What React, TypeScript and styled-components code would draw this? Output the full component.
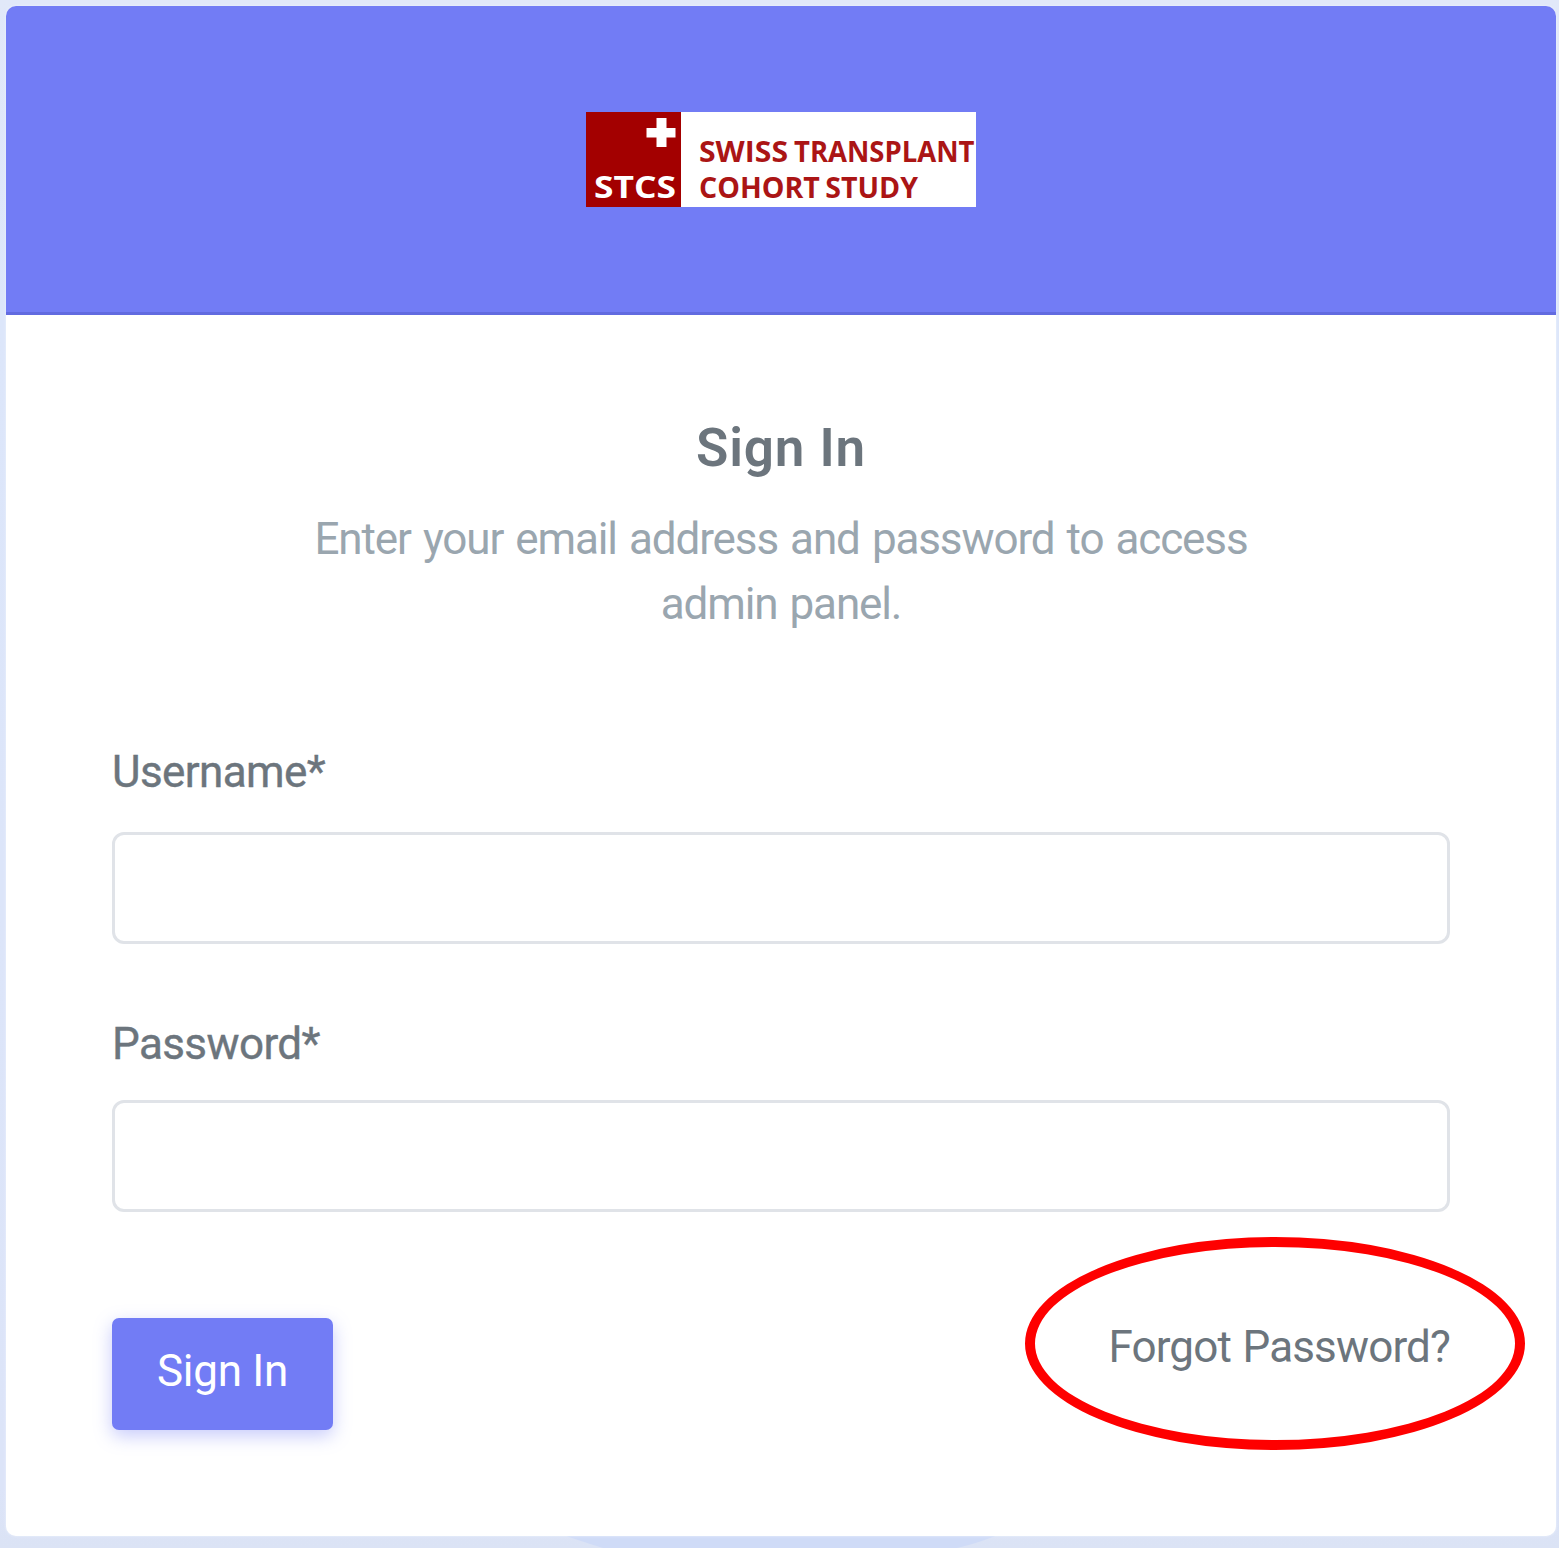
import React from "react";
import styled, { createGlobalStyle } from "styled-components";

const GlobalStyle = createGlobalStyle`
  *, *::before, *::after { box-sizing: border-box; }
  html, body { margin: 0; padding: 0; }
  body {
    background: #dce4f7;
    font-family: Roboto, "Liberation Sans", sans-serif;
    color: #6c757d;
  }
`;

const Page = styled.main`
  position: relative;
  width: 1559px;
  height: 1548px;
  padding: 6px 3px 12px 6px;
  overflow: hidden;
  background: linear-gradient(#e1e8f9, #dce6fa 20%, #dce4f8 96%, #dbe3f5);
`;

const Wave = styled.svg`
  position: absolute;
  left: 0;
  bottom: 0;
`;

const Card = styled.section`
  position: relative;
  height: 1530px;
  border-radius: 10px;
  background: #fff;
  box-shadow: 0 0 3px 0 rgba(240, 244, 254, 0.9);
  overflow: hidden;
`;

const CardHeader = styled.header`
  display: flex;
  justify-content: center;
  height: 309px;
  padding-top: 106px;
  background: #727cf5;
  border-bottom: 3px solid #626be0;
`;

const CardBody = styled.div`
  padding: 93px 106px 0;
`;

const Title = styled.h4`
  margin: 0 0 19px;
  text-align: center;
  font-size: 53px;
  line-height: 80px;
  font-weight: 600;
  letter-spacing: 0.9px;
`;

const Intro = styled.p`
  width: 1003px;
  margin: 0 auto 103px;
  padding: 0 20px;
  text-align: center;
  font-size: 44px;
  line-height: 65px;
  letter-spacing: -1.12px;
  word-spacing: 2.3px;
  color: #9aa6af;
`;

const Field = styled.div<{ $gap: number; $after: number }>`
  display: flex;
  flex-direction: column;
  gap: ${(p) => p.$gap}px;
  margin-bottom: ${(p) => p.$after}px;
`;

const Label = styled.label`
  font-size: 44px;
  line-height: 65px;
  letter-spacing: -0.6px;
  -webkit-text-stroke: 0.4px #6c757d;
`;

const Input = styled.input`
  width: 100%;
  height: 112px;
  padding: 0 38px;
  border: 3px solid #e0e3e8;
  border-radius: 12px;
  background: #fff;
  color: #6c757d;
  font: inherit;
  font-size: 44px;
  outline: none;
`;

const Actions = styled.div`
  display: flex;
  justify-content: space-between;
  align-items: flex-start;
`;

const SubmitButton = styled.button`
  width: 221px;
  height: 112px;
  padding: 0 0 5px;
  border: 0;
  border-radius: 7px;
  background: #727cf5;
  color: #fff;
  font: 400 44px/65px Roboto, "Liberation Sans", sans-serif;
  letter-spacing: -0.3px;
  box-shadow: 0 6px 18px 0 rgba(114, 124, 245, 0.4);
`;

const ForgotLink = styled.a`
  position: relative;
  margin-top: -3px;
  font-size: 44px;
  line-height: 65px;
  letter-spacing: -0.85px;
  word-spacing: 1.5px;
  color: #6c757d;
  text-decoration: none;
`;

const Highlight = styled.span`
  position: absolute;
  right: -75px;
  top: -78px;
  width: 500px;
  height: 213px;
  border: 10px solid #fe0000;
  border-radius: 50%;
  pointer-events: none;
`;

function Logo() {
  return (
    <svg width="390" height="95" viewBox="0 0 390 95" role="img" aria-label="Swiss Transplant Cohort Study">
      <rect width="390" height="95" fill="#fff" />
      <rect width="95" height="95" fill="#a30000" />
      <path d="M70.500 6h10v10h9v9.500h-9v9.500h-10V25.500H60.500V16h10z" fill="#fff" />
      <g fontFamily="'Open Sans', 'Noto Sans', sans-serif" fontWeight="700">
        <text x="8" y="86" fontSize="31" fill="#fff" textLength="82" lengthAdjust="spacingAndGlyphs">STCS</text>
        <g fontSize="28" fill="#ab1515" wordSpacing="-2">
          <text x="113" y="49.5" textLength="89" lengthAdjust="spacingAndGlyphs">SWISS</text>
          <text x="208" y="49.5" textLength="180.5" lengthAdjust="spacingAndGlyphs">TRANSPLANT</text>
          <text x="113" y="85.5" textLength="219" lengthAdjust="spacingAndGlyphs">COHORT STUDY</text>
        </g>
      </g>
    </svg>
  );
}

export default function App() {
  return (
    <>
      <GlobalStyle />
      <Page>
        <Wave width="1559" height="30" viewBox="0 0 1559 30" aria-hidden="true">
          <path d="M545 10Q567 19 603 30H957Q980 25 1015 10Z" fill="#cfdbf7" />
        </Wave>
        <Card>
          <CardHeader>
            <Logo />
          </CardHeader>
          <CardBody>
            <Title>Sign In</Title>
            <Intro>Enter your email address and password to access admin panel.</Intro>
            <form onSubmit={(e) => e.preventDefault()}>
              <Field $gap={27} $after={68}>
                <Label htmlFor="username">Username*</Label>
                <Input id="username" type="text" />
              </Field>
              <Field $gap={23} $after={106}>
                <Label htmlFor="password">Password*</Label>
                <Input id="password" type="password" />
              </Field>
              <Actions>
                <SubmitButton type="submit">Sign In</SubmitButton>
                <ForgotLink href="#">
                  Forgot Password?
                  <Highlight />
                </ForgotLink>
              </Actions>
            </form>
          </CardBody>
        </Card>
      </Page>
    </>
  );
}
